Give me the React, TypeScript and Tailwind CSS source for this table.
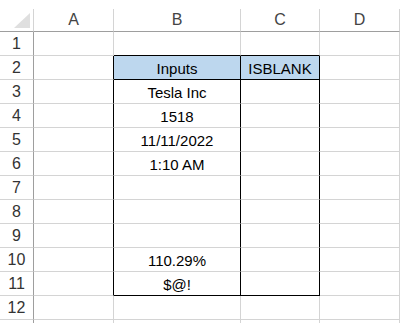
import React from "react";

// --- Sheet data ---
const COLUMNS = ["A", "B", "C", "D"];
const COL_WIDTHS = ["w-[80px]", "w-[127px]", "w-[79px]", "w-[80px]"];

const VALUES: Record<number, string> = {
    2: "Inputs",
    3: "Tesla Inc",
    4: "1518",
    5: "11/11/2022",
    6: "1:10 AM",
    10: "110.29%",
    11: "$@!",
};

// 12 numbered rows plus the edge of the next one
const ROWS = Array.from({ length: 13 }, (_, i) => i + 1);
const LAST_LABELLED = 12;

// the outlined block is B2:C11
const inBlock = (row: number) => row >= 2 && row <= 11;

const cellBorders = (col: string, row: number) => {
    const right =
        (col === "A" || col === "B" || col === "C") && inBlock(row)
            ? "border-r-black"
            : "border-r-[#d4d4d4]";
    const bottom =
        (col === "B" || col === "C") && (row === 1 || row === 2 || row === 11)
            ? "border-b-black"
            : "border-b-[#d4d4d4]";
    return `${right} ${bottom}`;
};

const Corner: React.FC = () => (
    <div className="w-[34px] h-[23px] shrink-0 border-r border-b border-r-[#d4d4d4] border-b-[#9e9e9e] relative">
        <svg className="absolute left-[14px] top-[4px]" width="16" height="15" viewBox="0 0 16 15">
            <polygon points="16,0 16,15 0,15" fill="#dfdfdf" />
        </svg>
    </div>
);

const App: React.FC = () => {
    return (
        <div
            className="w-[404px] h-[323px] overflow-hidden bg-white pt-[9px] text-[15px] text-black"
            style={{ fontFamily: '"Liberation Sans", Arial, sans-serif' }}
        >
            {/* column headers */}
            <div className="flex">
                <Corner />
                {COLUMNS.map((c, i) => (
                    <div
                        key={c}
                        className={`${COL_WIDTHS[i]} h-[23px] shrink-0 border-r border-b border-r-[#d4d4d4] border-b-[#9e9e9e] flex items-end justify-center pb-[3px] leading-[16px] text-[16px] text-[#444]`}
                    >
                        {c}
                    </div>
                ))}
            </div>

            {/* rows */}
            {ROWS.map((r) => (
                <div key={r} className="flex">
                    <div className="w-[34px] h-[24px] shrink-0 border-r border-b border-r-[#9e9e9e] border-b-[#d4d4d4] flex items-end justify-center pb-[3px] leading-[16px] text-[16px] text-[#333]">
                        {r <= LAST_LABELLED ? r : ""}
                    </div>
                    {COLUMNS.map((c, i) => {
                        const header = r === 2 && (c === "B" || c === "C");
                        const text = c === "B" ? VALUES[r] : header ? "ISBLANK" : "";
                        return (
                            <div
                                key={c}
                                className={`${COL_WIDTHS[i]} h-[24px] shrink-0 border-r border-b ${cellBorders(c, r)} ${header ? "bg-[#bdd7ee]" : ""} flex items-end justify-center pb-[3px] leading-[15px]`}
                            >
                                {text}
                            </div>
                        );
                    })}
                </div>
            ))}
        </div>
    );
};

export default App;
